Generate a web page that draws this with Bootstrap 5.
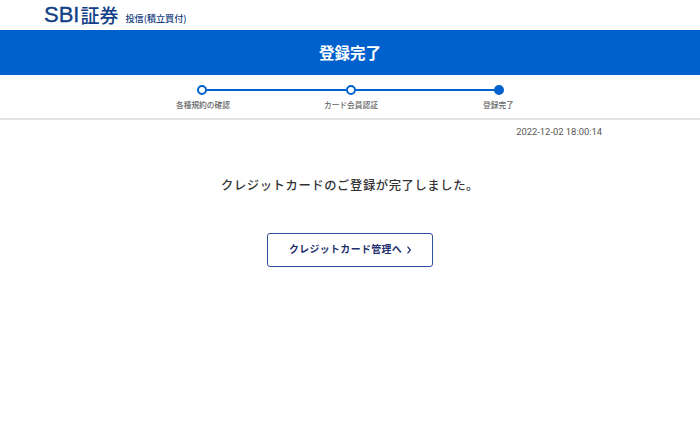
<!DOCTYPE html>
<html lang="ja">
<head>
<meta charset="utf-8">
<title>登録完了</title>
<link href="https://cdn.jsdelivr.net/npm/bootstrap@5.3.0/dist/css/bootstrap.min.css" rel="stylesheet">
<style>
body{font-family:"Noto Sans CJK JP","Liberation Sans",sans-serif;background:#fff;color:#333;height:432px;overflow:hidden}
.site-head{height:30px;padding-left:44px;padding-bottom:1px}
.brand-sbi{font-family:"Liberation Sans",sans-serif;font-size:22px;color:#123f86;line-height:1;-webkit-text-stroke:.35px #123f86}
.brand-sec{font-size:19px;color:#123f86;line-height:1;margin-left:1px;font-weight:500}
.brand-sub{font-size:9.1px;color:#123a7c;margin-left:7px;line-height:1;font-weight:500;padding-top:9px}
.title-bar{height:45px;background:#0060cc;color:#fff;font-size:15.5px;font-weight:700}
.steps-wrap{height:45px;border-bottom:2px solid #e2e2e2}
.steps-list{width:307px;margin-left:197px;padding-top:10px}
.step-dot{width:10px;height:10px;border:2px solid #0060cc;border-radius:50%;background:#fff;flex:none}
.step-dot.is-now{background:#0060cc}
.step-line{height:2px;background:#0060cc;flex:1 1 auto}
.steps-names{padding-left:176px;width:520px}
.step-name{font-size:7.7px;color:#666;white-space:nowrap;line-height:1;font-weight:500;margin-top:6px}
.name-a{width:148px}.name-b{width:159px}
.stamp{width:602px;text-align:right;font-family:Roboto,"Liberation Sans",sans-serif;font-size:9.4px;color:#555;line-height:1;padding-top:7px}
.done-msg{font-size:12.3px;letter-spacing:.6px;font-weight:500;color:#333;line-height:1;margin-top:43px}
.back-btn{width:166px;height:34px;margin-top:41px;border:1px solid #2f4f9c;border-radius:3px;color:#1c2f6e;font-size:9.9px;font-weight:700;letter-spacing:.4px;text-decoration:none;padding:0}
.back-btn:hover{color:#1c2f6e}
.back-btn svg{margin-left:5px}
</style>
</head>
<body>
<header class="site-head d-flex align-items-center">
<span class="brand-sbi">SBI</span><span class="brand-sec">証券</span><span class="brand-sub">投信(積立買付)</span>
</header>
<div class="title-bar d-flex align-items-center justify-content-center">登録完了</div>
<div class="steps-wrap">
<div class="steps-list d-flex align-items-center">
<span class="step-dot"></span>
<span class="step-line"></span>
<span class="step-dot"></span>
<span class="step-line"></span>
<span class="step-dot is-now"></span>
</div>
<div class="d-flex steps-names">
<span class="step-name name-a">各種規約の確認</span>
<span class="step-name name-b">カード会員認証</span>
<span class="step-name">登録完了</span>
</div>
</div>
<div class="stamp">2022-12-02 18:00:14</div>
<main class="d-flex flex-column align-items-center">
<p class="done-msg mb-0">クレジットカードのご登録が完了しました。</p>
<a href="#" class="back-btn btn d-flex align-items-center justify-content-center">クレジットカード管理へ<svg width="4" height="8" viewBox="0 0 4 8"><path d="M.5.6 3.4 4 .5 7.4" fill="none" stroke="#1c2f6e" stroke-width="1.2"/></svg></a>
</main>
</body>
</html>
